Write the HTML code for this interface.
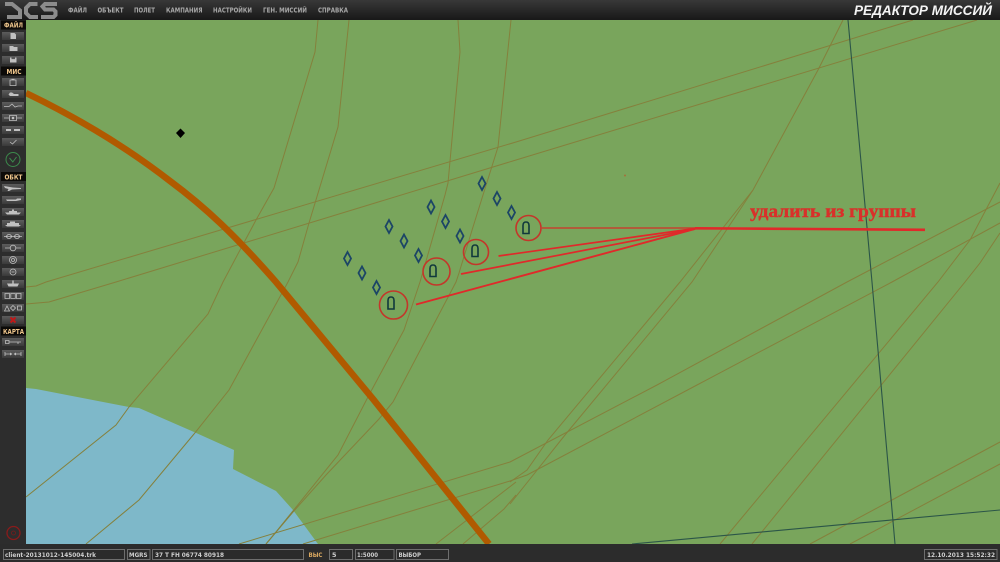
<!DOCTYPE html>
<html lang="ru"><head><meta charset="utf-8"><title>Редактор миссий</title>
<style>html,body{margin:0;padding:0;background:#2b2b2b;overflow:hidden}svg{display:block;filter:blur(.3px)}
.r{fill:none;stroke:#85803c;stroke-width:1}
.m{font:bold 7px "DejaVu Sans",sans-serif;fill:#a8a8a8}
.l{font:bold 7px "DejaVu Sans",sans-serif;fill:#efc68c}
.s{font:bold 6.500px "DejaVu Sans",sans-serif;fill:#cfcfcf}
.f{fill:#2b2b2b;stroke:#6e6e6e;stroke-width:1}
.i{fill:none;stroke:#c0c0c0;stroke-width:.8}.j{fill:#c0c0c0}
.d{fill:none;stroke:#1c4566;stroke-width:1.800}
.u{fill:none;stroke:#10383c;stroke-width:1.600}
.c{fill:none;stroke:#c4362a;stroke-width:1.600}
</style></head><body>
<svg width="1000" height="562" viewBox="0 0 1000 562" xmlns="http://www.w3.org/2000/svg">
<defs>
<linearGradient id="t" x1="0" y1="0" x2="0" y2="1"><stop offset="0" stop-color="#383838"/><stop offset="1" stop-color="#181818"/></linearGradient>
<linearGradient id="b" x1="0" y1="0" x2="0" y2="1"><stop offset="0" stop-color="#5c5c5c"/><stop offset="1" stop-color="#3a3a3a"/></linearGradient>
</defs>
<rect width="1000" height="562" fill="#2b2b2b"/>
<rect x="26" y="20" width="974" height="524" fill="#79a55c"/>
<path d="M26 388L36 389L129 407L139 408L194 432L234 450L233 469L276 491L293 510L318 544L26 544Z" fill="#7eb8c9"/>
<g class="r">
<path d="M318 20L315 52L274 188L256 220L223 282L208 314L129 407L116 425L26 497"/>
<path d="M349 20L338 127L309 223L298 262L288 282L229 390L194 434L139 500L86 544"/>
<path d="M458 20L460 52L448 183L445 195L420 282L404 330L369 395L338 455L276 532L266 544"/>
<path d="M511 20L498 147L473 227L459 273L456 282L393 402L379 419L326 475L293 512L266 544"/>
<path d="M26 287L36 286L46 282L516 142L913 20"/>
<path d="M26 304L49 302L116 282L516 160L977 20"/>
<path d="M843 20L818 70L753 190L680 282L548 440L527 470L510 482"/>
<path d="M753 190L692 282L565 435L530 479L510 504"/>
<path d="M1000 202L847 282L657 385L510 462L239 544"/>
<path d="M1000 223L892 282L697 385L527 475L510 481L303 544"/>
<path d="M516 482L436 544"/>
<path d="M516 495L504 509L463 544"/>
<path d="M1000 183L970 240L938 282L720 544"/>
<path d="M1000 233L980 263L965 282L752 544"/>
<path d="M1000 442L810 544"/>
<path d="M1000 464L850 544"/>
</g>
<path d="M26 93C80 119 130 150 170 181C205 207 235 235 276 282L373 399L489 544" fill="none" stroke="#b05a00" stroke-width="6.500"/>
<path d="M848 20L872 282L895 544" fill="none" stroke="#2b5548" stroke-width="1.100"/>
<path d="M632 544L1000 510" fill="none" stroke="#2b5548" stroke-width="1.100"/>
<path d="M180.500 128.500L185 133L180.500 138L176 133Z" fill="#000"/>
<circle cx="625" cy="175.500" r="1" fill="#a5703a"/>
<g class="d">
<path d="M482 177L485.500 183.500L482 190L478.500 183.500Z"/><path d="M497 192L500.500 198.500L497 205L493.500 198.500Z"/><path d="M511.500 206L515 212.500L511.500 219L508 212.500Z"/>
<path d="M431 200.500L434.500 207L431 213.500L427.500 207Z"/><path d="M445.500 215L449 221.500L445.500 228L442 221.500Z"/><path d="M460 229.500L463.500 236L460 242.500L456.500 236Z"/>
<path d="M389 220L392.500 226.500L389 233L385.500 226.500Z"/><path d="M404 234.500L407.500 241L404 247.500L400.500 241Z"/><path d="M418.500 249L422 255.500L418.500 262L415 255.500Z"/>
<path d="M347.500 252L351 258.500L347.500 265L344 258.500Z"/><path d="M362 266.500L365.500 273L362 279.500L358.500 273Z"/><path d="M376.500 281L380 287.500L376.500 294L373 287.500Z"/>
</g>
<g class="u">
<path d="M523 233.500V225.500Q523 222 526 222Q529 222 529 225.500V233.500Z"/>
<path d="M472 256.500V248.500Q472 245 475 245Q478 245 478 248.500V256.500Z"/>
<path d="M430 276.500V268.500Q430 265 433 265Q436 265 436 268.500V276.500Z"/>
<path d="M388 309V300.500Q388 297 391 297Q394 297 394 300.500V309Z"/>
</g>
<circle class="c" cx="528.500" cy="228" r="12.500"/><circle class="c" cx="476" cy="252" r="12.500"/><circle class="c" cx="436.500" cy="271.500" r="13.500"/><circle class="c" cx="393.500" cy="305" r="14"/>
<path d="M541 228H695" stroke="#c4452e" stroke-width="1.500" fill="none"/>
<g fill="none" stroke="#e0292a">
<path d="M498.500 256L695 228.500" stroke-width="1.700"/>
<path d="M461 274L695 229" stroke-width="1.700"/>
<path d="M416 304.500L695 229" stroke-width="1.900"/>
<path d="M695 228.300L735 228.500L810 229L925 229.800" stroke-width="2.600"/>
</g>
<text x="750" y="217" font-family="Liberation Serif, serif" font-weight="bold" font-size="18" fill="#d9302a" stroke="#d9302a" stroke-width=".4" textLength="166" lengthAdjust="spacingAndGlyphs">удалить из группы</text>

<rect width="1000" height="20" fill="url(#t)"/>
<g fill="none" stroke="#8c8c8c" stroke-width="4">
<path d="M5 4H12L20 10.500V17H7"/>
<path d="M37.500 4H30L26 8V13L30 17H38"/>
<path d="M57 4H45L42.500 6.500L45 9.500H53.500L55.500 11.500V15L53.500 17H41"/>
</g>
<g class="m">
<text x="68" y="12.500" textLength="19" lengthAdjust="spacingAndGlyphs">ФАЙЛ</text>
<text x="97.500" y="12.500" textLength="26" lengthAdjust="spacingAndGlyphs">ОБЪЕКТ</text>
<text x="134" y="12.500" textLength="21" lengthAdjust="spacingAndGlyphs">ПОЛЕТ</text>
<text x="166" y="12.500" textLength="36.500" lengthAdjust="spacingAndGlyphs">КАМПАНИЯ</text>
<text x="213" y="12.500" textLength="39" lengthAdjust="spacingAndGlyphs">НАСТРОЙКИ</text>
<text x="263" y="12.500" textLength="44" lengthAdjust="spacingAndGlyphs">ГЕН. МИССИЙ</text>
<text x="318" y="12.500" textLength="30" lengthAdjust="spacingAndGlyphs">СПРАВКА</text>
</g>
<text x="854" y="15" font-family="Liberation Sans, sans-serif" font-weight="bold" font-style="italic" font-size="13.500" fill="#f4f4f4" textLength="138" lengthAdjust="spacingAndGlyphs">РЕДАКТОР МИССИЙ</text>

<rect x="0" y="20" width="26" height="524" fill="#2d2d2d"/>
<rect x="1" y="20.500" width="25" height="9" fill="#0c0a08"/><rect x="1" y="66.500" width="25" height="9" fill="#0c0a08"/><rect x="1" y="172" width="25" height="9" fill="#0c0a08"/><rect x="1" y="326.500" width="25" height="9" fill="#0c0a08"/>
<g class="l">
<text x="4" y="27.500" textLength="19" lengthAdjust="spacingAndGlyphs">ФАЙЛ</text>
<text x="6.500" y="74" textLength="15" lengthAdjust="spacingAndGlyphs">МИС</text>
<text x="4.500" y="179.500" textLength="18" lengthAdjust="spacingAndGlyphs">ОБКТ</text>
<text x="3" y="334" textLength="21" lengthAdjust="spacingAndGlyphs">КАРТА</text>
</g>
<g fill="url(#b)">
<rect x="2" y="32" width="22" height="8"/><rect x="2" y="44" width="22" height="8"/><rect x="2" y="56" width="22" height="8"/>
<rect x="2" y="78" width="22" height="8"/><rect x="2" y="90" width="22" height="8"/><rect x="2" y="102" width="22" height="8"/><rect x="2" y="114" width="22" height="8"/><rect x="2" y="126" width="22" height="8"/><rect x="2" y="138" width="22" height="8"/>
<rect x="2" y="184" width="22" height="8"/><rect x="2" y="196" width="22" height="8"/><rect x="2" y="208" width="22" height="8"/><rect x="2" y="220" width="22" height="8"/><rect x="2" y="232" width="22" height="8"/><rect x="2" y="244" width="22" height="8"/><rect x="2" y="256" width="22" height="8"/><rect x="2" y="268" width="22" height="8"/><rect x="2" y="280" width="22" height="8"/><rect x="2" y="292" width="22" height="8"/><rect x="2" y="304" width="22" height="8"/><rect x="2" y="316" width="22" height="8"/>
<rect x="2" y="338" width="22" height="8"/><rect x="2" y="350" width="22" height="8"/>
</g>
<path class="j" d="M10.500 33H14.500L16 34.500V39H10.500Z"/>
<path class="j" d="M9.500 46H13L14 47H17.500V51H9.500Z"/>
<path class="j" d="M10 57.500H16.500V62.500H10Z"/><rect x="11.500" y="57.500" width="3.500" height="1.600" fill="#555"/>
<path class="i" d="M10 80H16V85.500H10ZM11.500 79.300H14.500"/>
<path class="j" d="M8.500 94.500L10 92.500H12L14 94H18.500V96H10Z"/>
<path class="i" d="M4 106.500H9L12 104L15 107L18 106H22"/>
<path class="i" d="M4 118H9M17 118H22M9.500 115.500H16.500V120.500H9.500Z"/><circle class="j" cx="13" cy="118" r="1.300"/>
<path class="j" d="M6 129H11V131H6ZM14 129H20V131H14Z"/>
<path class="i" d="M10 142L12.500 144L16.500 140" stroke-width="1.200"/>
<circle cx="13" cy="159.500" r="7" fill="none" stroke="#3c8a4c" stroke-width="1"/>
<path d="M9.500 158L12.800 162L16.500 157" fill="none" stroke="#3c8a4c" stroke-width="1"/>
<path class="j" d="M4 186L7 186.500L13 187.500L21 188V189L12 189.500L9 191H7.500L8.500 189L5 188Z"/>
<path class="j" d="M6 199.500H16L17 198.500H21V200L16 201H7Z"/>
<path class="j" d="M5 212.500H21L19 214.500H7ZM9 212V211H12V209.500H14V211H17V212.500H9Z"/>
<path class="j" d="M5 225H21L19 226.500H7ZM7 225V223H10V221.500H15V223H19V225Z"/>
<path class="i" d="M4 236.500H22M6 236.500L8 234.500H10L12 236.500L10 238.500H8ZM14 236.500L16 234.500H18L20 236.500L18 238.500H16Z"/>
<path class="i" d="M5 248H10M16 248H21"/><circle class="i" cx="13" cy="248" r="2.800"/>
<circle class="i" cx="13" cy="260" r="3.500"/><circle class="i" cx="13" cy="260" r="1.500"/>
<circle class="i" cx="13" cy="272" r="3"/><path class="i" d="M11.500 272H14.500"/>
<path class="j" d="M7 283.500H19L17.500 286.500H8.500ZM12.300 280.500H13.700V283.500H12.300Z"/>
<path class="i" d="M5 293.500H9.500V298.500H5ZM10.800 293.500H15.300V298.500H10.800ZM16.500 293.500H21V298.500H16.500Z"/>
<path class="i" d="M4.500 311L7 306L9.500 311ZM13 305.500L15.500 308L13 310.500L10.500 308ZM17.500 306H21.500V310H17.500Z"/>
<path d="M10.500 317.500L15.500 322.500M15.500 317.500L10.500 322.500" stroke="#c01818" stroke-width="2"/>
<path class="i" d="M5.500 340.500H9V343.500H5.500ZM9 342H21M18 342V344"/>
<path class="i" d="M5 352V356M21 352V356M5 354H10M16 354H21"/><path class="j" d="M10 352.500L12.500 354L10 355.500ZM16 352.500L13.500 354L16 355.500Z"/>
<circle cx="13.500" cy="533" r="6.500" fill="none" stroke="#8a1b1b" stroke-width="1.300"/><circle cx="13.500" cy="533" r="2" fill="none" stroke="#7a1b1b" stroke-width=".8"/>

<rect x="0" y="544" width="1000" height="18" fill="#2c2c2c"/>
<rect class="f" x="3.500" y="549.500" width="121" height="10"/>
<rect class="f" x="127.500" y="549.500" width="22.500" height="10"/>
<rect class="f" x="152.500" y="549.500" width="151" height="10"/>
<rect class="f" x="329.500" y="549.500" width="23" height="10"/>
<rect class="f" x="355.500" y="549.500" width="38.500" height="10"/>
<rect class="f" x="396.500" y="549.500" width="52" height="10"/>
<rect class="f" x="924.500" y="549.500" width="72.500" height="10"/>
<g class="s">
<text x="5" y="557" textLength="91" lengthAdjust="spacingAndGlyphs">client-20131012-145004.trk</text>
<text x="129" y="557" textLength="18.500" lengthAdjust="spacingAndGlyphs">MGRS</text>
<text x="155" y="557" textLength="69" lengthAdjust="spacingAndGlyphs">37 T FH 06774 80918</text>
<text x="332" y="557" textLength="4.500" lengthAdjust="spacingAndGlyphs">5</text>
<text x="357" y="557" textLength="21" lengthAdjust="spacingAndGlyphs">1:5000</text>
<text x="398.500" y="557" textLength="22.500" lengthAdjust="spacingAndGlyphs">ВЫБОР</text>
<text x="927" y="557" textLength="68" lengthAdjust="spacingAndGlyphs">12.10.2013 15:52:32</text>
</g>
<text x="308.500" y="557" class="l" style="font-size:6.500px;fill:#d9a860" textLength="14" lengthAdjust="spacingAndGlyphs">ВЫС</text>
</svg>
</body></html>
